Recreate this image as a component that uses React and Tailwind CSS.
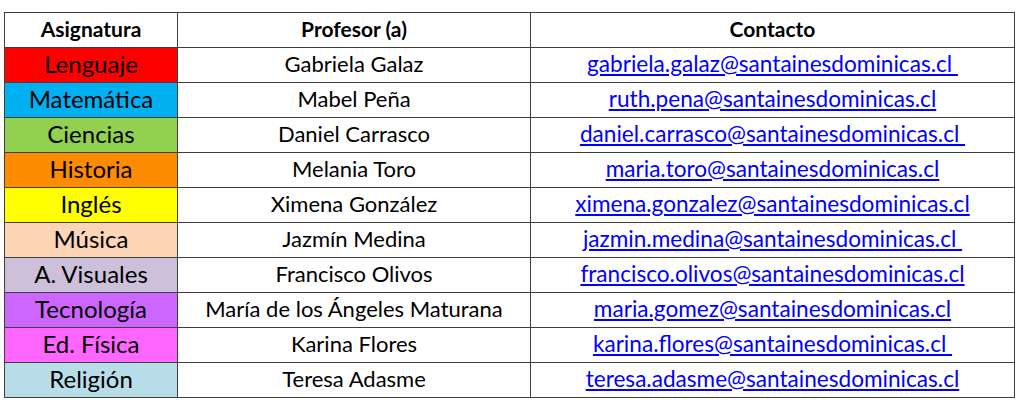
const rows = [
  { subject: "Lenguaje", bg: "bg-[#ff0000]", teacher: "Gabriela Galaz", email: "gabriela.galaz@santainesdominicas.cl " },
  { subject: "Matemática", bg: "bg-[#00b0f0]", teacher: "Mabel Peña", email: "ruth.pena@santainesdominicas.cl" },
  { subject: "Ciencias", bg: "bg-[#92d050]", teacher: "Daniel Carrasco", email: "daniel.carrasco@santainesdominicas.cl " },
  { subject: "Historia", bg: "bg-[#ff8c00]", teacher: "Melania Toro", email: "maria.toro@santainesdominicas.cl" },
  { subject: "Inglés", bg: "bg-[#ffff00]", teacher: "Ximena González", email: "ximena.gonzalez@santainesdominicas.cl" },
  { subject: "Música", bg: "bg-[#fbd5b5]", teacher: "Jazmín Medina", email: "jazmin.medina@santainesdominicas.cl " },
  { subject: "A. Visuales", bg: "bg-[#ccc0da]", teacher: "Francisco Olivos", email: "francisco.olivos@santainesdominicas.cl" },
  { subject: "Tecnología", bg: "bg-[#cc66ff]", teacher: "María de los Ángeles Maturana", email: "maria.gomez@santainesdominicas.cl" },
  { subject: "Ed. Física", bg: "bg-[#ff66ff]", teacher: "Karina Flores", email: "karina.flores@santainesdominicas.cl " },
  { subject: "Religión", bg: "bg-[#b7dee8]", teacher: "Teresa Adasme", email: "teresa.adasme@santainesdominicas.cl" },
];

function App() {
  return (
    <div className="w-[1024px] h-[406px] bg-white pt-[12px] pl-[4px] font-['Lato','Liberation_Sans',sans-serif] text-black">
      <table className="table-fixed border-collapse">
        <colgroup>
          <col className="w-[173px]" />
          <col className="w-[353px]" />
          <col className="w-[484px]" />
        </colgroup>
        <thead>
          <tr className="h-[35px] text-[21px] font-bold">
            <th className="border border-[#3f3f3f] text-center leading-none pb-[3px]">Asignatura</th>
            <th className="border border-[#3f3f3f] text-center leading-none pb-[3px]">Profesor (a)</th>
            <th className="border border-[#3f3f3f] text-center leading-none pb-[3px]">Contacto</th>
          </tr>
        </thead>
        <tbody>
          {rows.map((r) => (
            <tr key={r.subject} className="h-[35px]">
              <td className={`border border-[#3f3f3f] text-center text-[24px] leading-none pb-[2px] ${r.bg}`}>{r.subject}</td>
              <td className="border border-[#3f3f3f] text-center text-[22px] leading-none pb-[2px]">{r.teacher}</td>
              <td className="border border-[#3f3f3f] text-center text-[22.6px] leading-none pb-[2px]">
                <a href="#" className="text-[#0000ff] underline whitespace-pre">{r.email}</a>
              </td>
            </tr>
          ))}
        </tbody>
      </table>
    </div>
  );
}

export default App;
